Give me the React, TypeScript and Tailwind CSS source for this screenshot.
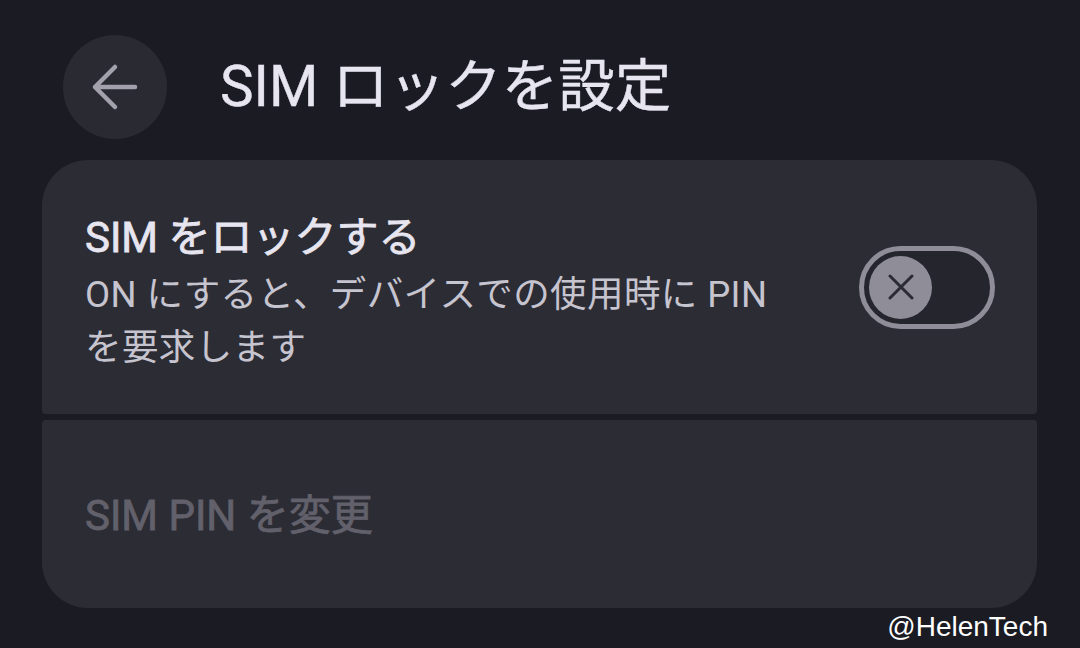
import React from "react";

export default function App() {
  const font = { fontFamily: 'Roboto, "Noto Sans CJK JP", sans-serif' };
  return (
    <div
      className="relative w-[1080px] h-[648px] overflow-hidden bg-[#1b1b23] flex flex-col"
      style={font}
    >
      <header className="flex items-center mt-[35px] ml-[63px] gap-[53px]">
        <div className="w-[104px] h-[104px] rounded-full bg-[#2a2a32] flex items-center justify-center">
          <svg width="48" height="48" viewBox="0 0 48 48" fill="none">
            <path
              d="M44 24H4M4 24L24 4M4 24L24 44"
              stroke="#a3a1ab"
              strokeWidth="4.5"
              strokeLinecap="round"
              strokeLinejoin="round"
            />
          </svg>
        </div>
        <h1 className="text-[56.5px] leading-none text-[#e7e5ef] font-normal [-webkit-text-stroke:0.4px_#e7e5ef]">
          SIM ロックを設定
        </h1>
      </header>

      <div className="mt-[21px] ml-[42px] mr-[43px] flex flex-col gap-[6px]">
        <div className="h-[254px] rounded-t-[46px] rounded-b-[4px] bg-[#2c2c35] flex items-center justify-between pl-[43px] pr-[42px]">
          <div className="pt-[14px] flex flex-col">
            <div className="text-[42px] leading-[48px] font-normal text-[#e7e5ef] [-webkit-text-stroke:0.8px_#e7e5ef]">
              SIM をロックする
            </div>
            <div className="mt-[6px] text-[36.5px] leading-[53px] tracking-[0.4px] text-[#c6c4cf]">
              ON にすると、デバイスでの使用時に PIN
              <br />
              を要求します
            </div>
          </div>
          <div className="w-[136px] h-[83px] rounded-full border-[5px] border-[#8f8d98] bg-[#25252d] flex items-center pl-[5px] shrink-0">
            <div className="w-[63px] h-[63px] rounded-full bg-[#8f8d98] flex items-center justify-center">
              <svg width="26" height="26" viewBox="0 0 26 26" fill="none">
                <path
                  d="M2 2L24 24M24 2L2 24"
                  stroke="#2b2b33"
                  strokeWidth="3"
                  strokeLinecap="round"
                />
              </svg>
            </div>
          </div>
        </div>
        <div className="h-[188px] rounded-t-[4px] rounded-b-[46px] bg-[#2c2c35] flex items-center pl-[43px]">
          <div className="pt-[4px] text-[42px] leading-none font-normal text-[#62616b] [-webkit-text-stroke:0.8px_#62616b]">
            SIM PIN を変更
          </div>
        </div>
      </div>

      <div
        className="absolute right-[32px] bottom-[7px] text-[28px] leading-none text-white"
        style={{ fontFamily: '"Liberation Sans", Arial, sans-serif' }}
      >
        @HelenTech
      </div>
    </div>
  );
}
